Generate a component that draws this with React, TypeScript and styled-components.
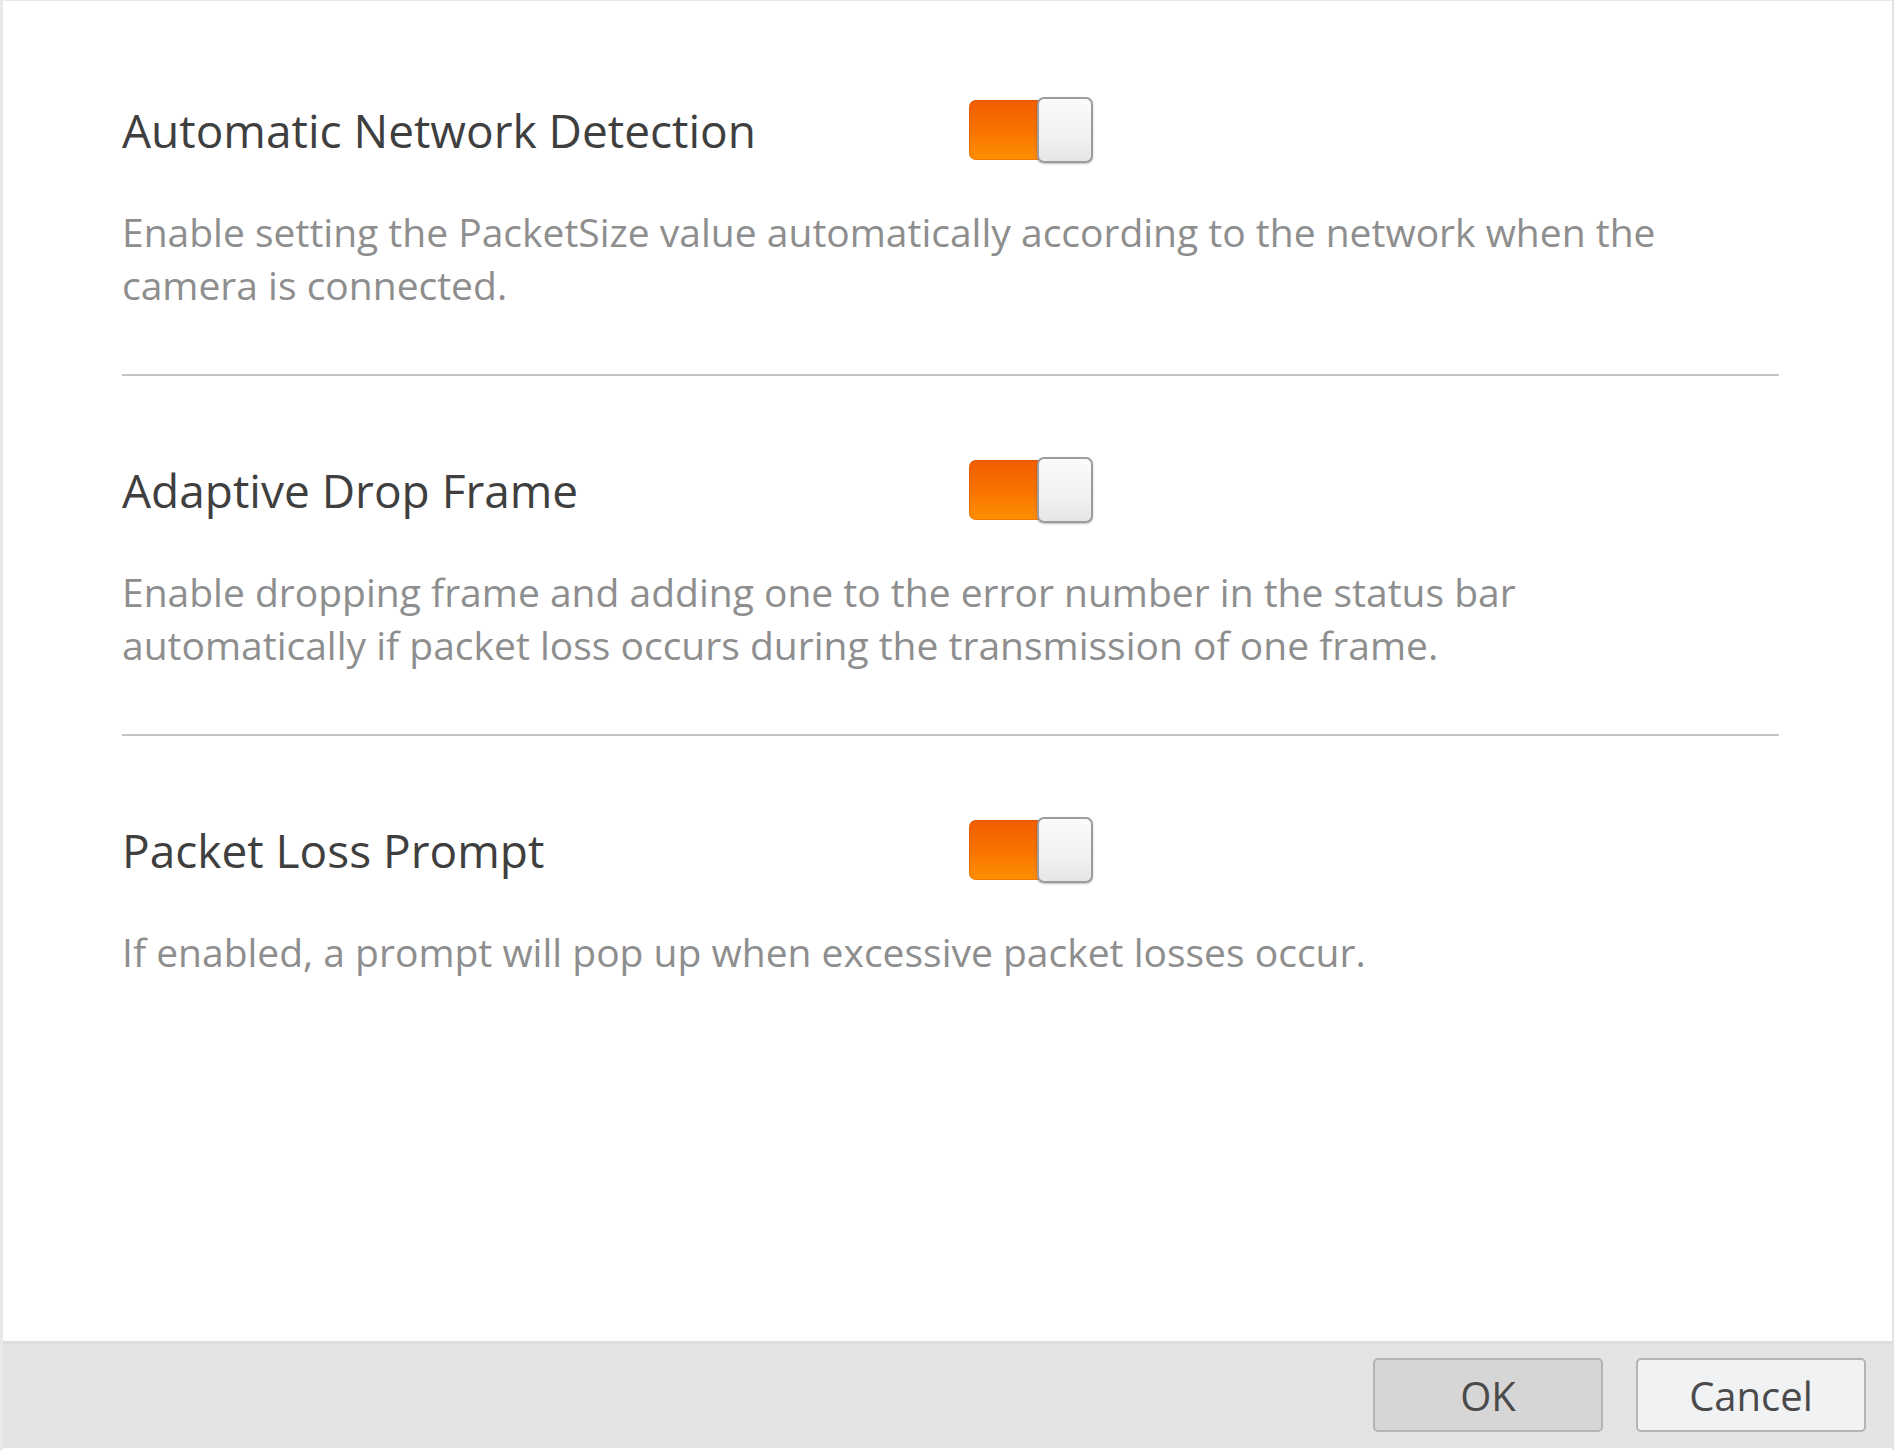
import React from "react";
import styled, { createGlobalStyle } from "styled-components";

const Global = createGlobalStyle`
  html, body { margin: 0; padding: 0; background: #ffffff; }
  body { font-family: "Open Sans", "Noto Sans", "Liberation Sans", sans-serif; }
  #root { height: 1450px; }
`;

const Frame = styled.div`
  height: 1450px;
  display: flex;
  flex-direction: column;
  box-sizing: border-box;
  border-left: 3px solid #e9e9e9;
  border-right: 2px solid #e2e2e2;
  border-top: 1px solid #e9e9e9;
  background: #ffffff;
`;

const Content = styled.div`
  flex: 1;
  display: flex;
  flex-direction: column;
  padding: 0 113px 0 119px;
`;

const Section = styled.section<{ $first?: boolean; $last?: boolean }>`
  padding-top: ${(p) => (p.$first ? "96px" : "81px")};
  padding-bottom: 63px;
  border-bottom: ${(p) => (p.$last ? "none" : "2px solid #c4c4c4")};
`;

const Header = styled.div`
  display: flex;
  align-items: center;
  height: 66px;
`;

const Title = styled.h2`
  margin: 0;
  width: 847px;
  flex: none;
  font-size: 46px;
  line-height: 66px;
  font-weight: 400;
  color: #3f3f3f;
  white-space: nowrap;
`;

const Toggle = styled.div`
  position: relative;
  width: 124px;
  height: 66px;
  display: flex;
  align-items: center;
`;

const Track = styled.div`
  width: 120px;
  height: 60px;
  border-radius: 7px;
  background: linear-gradient(to bottom, #f05d00 0%, #f87200 50%, #ff8f00 100%);
  box-shadow: inset 0 0 0 1px rgba(200, 80, 0, 0.35);
`;

const Knob = styled.div`
  position: absolute;
  right: 0;
  top: 0;
  width: 52px;
  height: 62px;
  border: 2px solid #9c9c9c;
  border-radius: 7px;
  background: linear-gradient(to bottom, #fbfbfb 0%, #f1f1f1 60%, #e6e6e6 100%);
  box-shadow: 0 1px 2px rgba(0, 0, 0, 0.25);
`;

const Desc = styled.p`
  margin: 42px 0 0;
  max-width: 1600px;
  font-size: 39px;
  line-height: 53px;
  color: #8e8e8e;
`;

const Footer = styled.div`
  height: 107px;
  border-top: 3px solid #dcdddd;
  background: #e3e4e5;
  display: flex;
  justify-content: flex-end;
  align-items: flex-start;
  gap: 33px;
  padding: 14px 26px 0 0;
  box-sizing: border-box;
  margin-bottom: 2px;
`;

const Button = styled.button<{ $primary?: boolean }>`
  width: 230px;
  height: 74px;
  border: 2px solid #b4b4b4;
  border-radius: 5px;
  background: ${(p) => (p.$primary ? "#d7d6d6" : "#f1f2f4")};
  color: #4a4a4a;
  font-family: "Open Sans", "Noto Sans", sans-serif;
  font-size: 40px;
  padding: 0;
`;

const items = [
  {
    title: "Automatic Network Detection",
    desc: "Enable setting the PacketSize value automatically according to the network when the camera is connected.",
  },
  {
    title: "Adaptive Drop Frame",
    desc: "Enable dropping frame and adding one to the error number in the status bar automatically if packet loss occurs during the transmission of one frame.",
  },
  {
    title: "Packet Loss Prompt",
    desc: "If enabled, a prompt will pop up when excessive packet losses occur.",
  },
];

export default function App() {
  return (
    <>
      <Global />
      <Frame>
        <Content>
          {items.map((it, i) => (
            <Section key={it.title} $first={i === 0} $last={i === items.length - 1}>
              <Header>
                <Title>{it.title}</Title>
                <Toggle role="switch" aria-checked="true">
                  <Track />
                  <Knob />
                </Toggle>
              </Header>
              <Desc>{it.desc}</Desc>
            </Section>
          ))}
        </Content>
        <Footer>
          <Button $primary>OK</Button>
          <Button>Cancel</Button>
        </Footer>
      </Frame>
    </>
  );
}
